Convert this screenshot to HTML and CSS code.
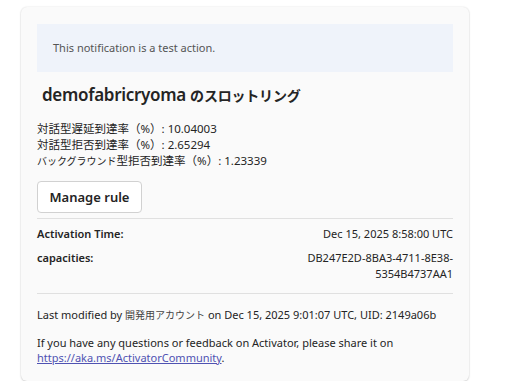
FILE: index.html
```html
<!DOCTYPE html>
<html lang="ja">
<head>
<meta charset="utf-8">
<link rel="stylesheet" href="styles.css">
</head>
<body>
<div class="card">
  <div class="notice">This notification is a test action.</div>
  <h1 class="title">demofabricryoma <span class="jp">のスロットリング</span></h1>
  <div class="metrics">
    <div>対話型遅延到達率（%）: 10.04003</div>
    <div>対話型拒否到達率（%）: 2.65294</div>
    <div><span class="kana">バックグラウンド</span>型拒否到達率（%）: 1.23339</div>
  </div>
  <button class="btn">Manage rule</button>
  <div class="facts">
    <div class="fact"><span class="key">Activation Time:</span><span class="val">Dec 15, 2025 8:58:00 UTC</span></div>
    <div class="fact"><span class="key">capacities:</span><span class="val">DB247E2D-8BA3-4711-8E38-<br>5354B4737AA1</span></div>
  </div>
  <div class="footer">
    <p>Last modified by <span class="user">開発用アカウント</span> on Dec 15, 2025 9:01:07 UTC, UID: 2149a06b</p>
    <p class="help">If you have any questions or feedback on Activator, please share it on <a href="#">https://aka.ms/ActivatorCommunity</a>.</p>
  </div>
</div>
</body>
</html>
```
FILE: styles.css
```css
html, body { margin: 0; padding: 0; background: #ffffff; }
body {
  font-family: "Noto Sans", "Noto Sans CJK JP", sans-serif;
  color: #242424;
  padding: 7px 0 0 21px;
}
.card {
  width: 416px;
  background: #fafafa;
  border-radius: 6px;
  box-shadow: 0 0 2px rgba(0,0,0,0.12), 0 1px 2px rgba(0,0,0,0.14);
  padding: 17px 16px 16px 16px;
}
.notice {
  background: #eff3fa;
  color: #555;
  font-size: 11px;
  padding: 16px 16px;
  line-height: 16px;
}
.title {
  font-size: 17px;
  font-weight: 600;
  letter-spacing: -0.3px;
  margin: 11px 0 13px 5px;
  line-height: 24px;
  color: #242424;
}
.title .jp { font-size: 14px; font-weight: 600; letter-spacing: -0.2px; }
.metrics { font-size: 11.5px; line-height: 16px; }
.metrics .kana { font-size: 10px; }
.btn {
  display: block;
  margin-top: 12px;
  font-family: inherit;
  font-size: 13px;
  font-weight: 600;
  color: #242424;
  background: #fff;
  border: 1px solid #d1d1d1;
  border-radius: 4px;
  padding: 0;
  height: 32px;
  width: 105px;
  white-space: nowrap;
}
.facts {
  margin-top: 5px;
  border-top: 1px solid #e0e0e0;
  border-bottom: 1px solid #e0e0e0;
  padding: 7px 0 11px;
  font-size: 11px;
  line-height: 16px;
}
.fact { display: flex; justify-content: space-between; margin-bottom: 8px; }
.fact:last-child { margin-bottom: 0; }
.key { font-weight: 600; }
.val { text-align: right; }
.footer { font-size: 11px; line-height: 16px; padding-top: 6px; }
.footer p { margin: 7px 0 0; }
.footer .help { margin-top: 12px; line-height: 15px; }
.footer .user { font-size: 10px; color: #444; }
.footer a { color: #4f52b2; }
```
